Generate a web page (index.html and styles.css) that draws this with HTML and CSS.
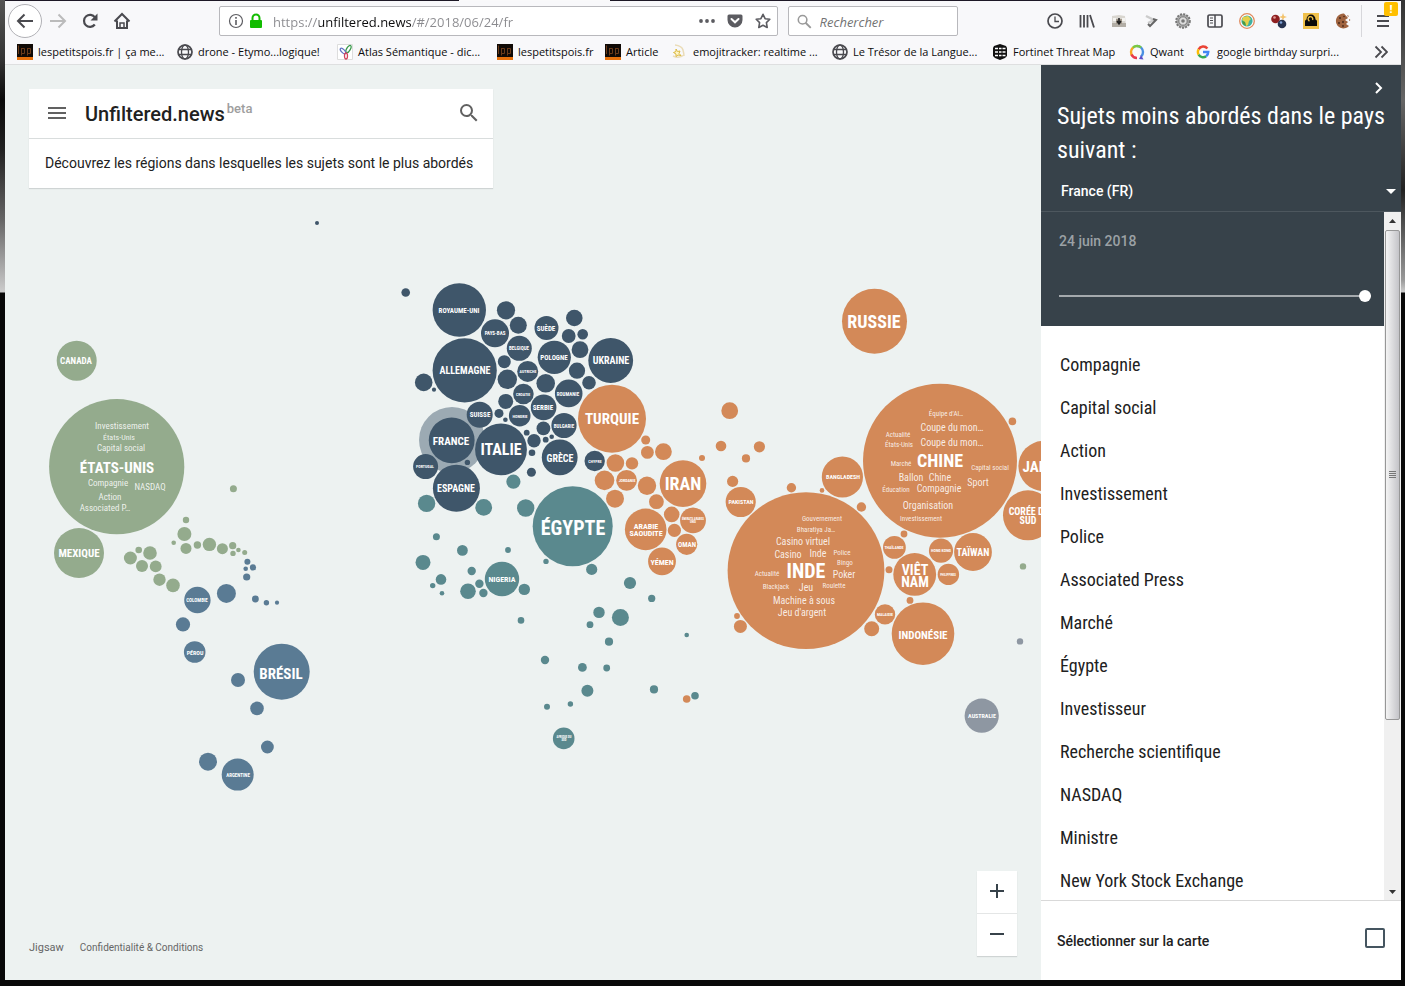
FILE: index.html
```html
<!DOCTYPE html>
<html lang="fr">
<head>
<meta charset="utf-8">
<title>Unfiltered.news</title>
<link rel="stylesheet" href="styles.css">
</head>
<body>
<div class="window">
  <div class="tabline"><span class="tabline-active"></span></div>
  <header class="chrome">
    <div class="navbar">
      <button class="tool back" aria-label="Précédent"><svg width="18" height="18" viewBox="0 0 18 18"><path d="M17 9H2M8.500 2.500L2 9l6.500 6.500" fill="none" stroke="#4a4a4f" stroke-width="2"/></svg></button>
      <button class="tool" aria-label="Suivant"><svg width="18" height="18" viewBox="0 0 18 18"><path d="M1 9h15M9.500 2.500L16 9l-6.500 6.500" fill="none" stroke="#bbb" stroke-width="2"/></svg></button>
      <button class="tool" aria-label="Actualiser"><svg width="18" height="18" viewBox="0 0 18 18"><path d="M13.800 12.500A6 6 0 1 1 14 5.500" fill="none" stroke="#4a4a4f" stroke-width="2.200"/><path d="M16.500 1.500v7h-7z" fill="#4a4a4f"/></svg></button>
      <button class="tool" aria-label="Accueil"><svg width="18" height="18" viewBox="0 0 18 18"><path d="M1.500 9.500L9 2l7.500 7.500M4 8.500V16h10V8.500" fill="none" stroke="#4a4a4f" stroke-width="2"/><path d="M7 16v-5h4v5z" fill="none" stroke="#4a4a4f" stroke-width="1.500"/></svg></button>
      <div class="urlbar">
        <svg width="16" height="16" viewBox="0 0 16 16"><circle cx="8" cy="8" r="6.500" fill="none" stroke="#5c5c61" stroke-width="1.200"/><path d="M8 7v5M8 4v1.700" stroke="#5c5c61" stroke-width="1.600"/></svg>
        <svg width="14" height="16" viewBox="0 0 14 16"><path d="M3.500 8V5a3.500 3.500 0 0 1 7 0v3" fill="none" stroke="#12bc00" stroke-width="2"/><rect x="1" y="7" width="12" height="8" rx="1" fill="#12bc00"/></svg>
        <input class="url" type="text" aria-label="Adresse" value="https://unfiltered.news/#/2018/06/24/fr">
        <button class="tool small" aria-label="Actions"><svg width="18" height="6" viewBox="0 0 18 6"><g fill="#5c5c61"><circle cx="3" cy="3" r="1.900"/><circle cx="9" cy="3" r="1.900"/><circle cx="15" cy="3" r="1.900"/></g></svg></button>
        <button class="tool small" aria-label="Pocket"><svg width="16" height="16" viewBox="0 0 16 16"><path d="M2 1.500h12a1.500 1.500 0 0 1 1.500 1.500v4a7.500 7.500 0 0 1-15 0V3A1.500 1.500 0 0 1 2 1.500z" fill="#5c5c61"/><path d="M4.500 6L8 9.300 11.500 6" fill="none" stroke="#fff" stroke-width="2" stroke-linecap="round"/></svg></button>
        <button class="tool small" aria-label="Favori"><svg width="16" height="16" viewBox="0 0 16 16"><path d="M8 1.300l2.100 4.400 4.700.6-3.400 3.300.8 4.900L8 12.200l-4.200 2.300.8-4.900L1.200 6.300l4.700-.6z" fill="none" stroke="#5c5c61" stroke-width="1.600" stroke-linejoin="round"/></svg></button>
      </div>
      <div class="searchbar">
        <svg width="17" height="17" viewBox="0 0 17 17"><circle cx="6.500" cy="6.500" r="5" fill="none" stroke="#999" stroke-width="1.800"/><path d="M10 10l6 6" stroke="#999" stroke-width="2.200"/></svg>
        <input type="search" aria-label="Rechercher" placeholder="Rechercher">
      </div>
      <div class="extensions">
        <button class="tool" aria-label="Historique"><svg width="16" height="16" viewBox="0 0 16 16"><circle cx="8" cy="8" r="7" fill="none" stroke="#4a4a4f" stroke-width="1.700"/><path d="M8 3.500v5h4" fill="none" stroke="#4a4a4f" stroke-width="1.300"/></svg></button>
        <button class="tool" aria-label="Bibliothèque"><svg width="16" height="16" viewBox="0 0 16 16"><path d="M1.500 2v12.500M5 2v12.500M8.500 2v12.500M11 2l4 12.500" stroke="#4a4a4f" stroke-width="1.800"/></svg></button>
        <button class="tool" aria-label="Capture"><svg width="16" height="16" viewBox="0 0 16 16"><path d="M1 3l7-1 6 1 1 11H1z" fill="#d9d6d0"/><path d="M1 10h14v4H1z" fill="#b3aea6"/><path d="M2 5h3v3H2zM11 5h3v3h-3z" fill="#f4f3f0"/><path d="M5 6h6v5H5z" fill="#a39a8e"/><path d="M8 5v5M6 8l2 3 2-3" stroke="#222" stroke-width="1.500" fill="none"/></svg></button>
        <button class="tool" aria-label="Rediriger"><svg width="16" height="16" viewBox="0 0 16 16"><path d="M3 3l8 4-6 3" fill="none" stroke="#ccc" stroke-width="2.500"/><path d="M5 11l2 2 6-6-3-1" fill="none" stroke="#666" stroke-width="2"/></svg></button>
        <button class="tool" aria-label="Réglages"><svg width="16" height="16" viewBox="0 0 16 16"><circle cx="8" cy="8" r="6.800" fill="#aaa" stroke="#777" stroke-width="2" stroke-dasharray="2 1.200"/><circle cx="8" cy="8" r="4.200" fill="#ddd" stroke="#777"/><circle cx="8" cy="8" r="1.800" fill="#777"/></svg></button>
        <button class="tool" aria-label="Barre latérale"><svg width="16" height="16" viewBox="0 0 16 16"><rect x="1" y="2" width="14" height="12" rx="1.500" fill="none" stroke="#4a4a4f" stroke-width="1.700"/><path d="M8 2v12" stroke="#4a4a4f" stroke-width="1.500"/><path d="M3 5h3M3 7.500h3M3 10h3" stroke="#4a4a4f"/></svg></button>
        <button class="tool" aria-label="Globe"><svg width="16" height="16" viewBox="0 0 16 16"><circle cx="8" cy="8" r="7.300" fill="#fff" stroke="#e08a5c" stroke-width="1.300"/><circle cx="8" cy="8" r="5.600" fill="#3fb0a0"/><path d="M4 4l5-1 3 3-2 2-1 4-2 1-1-4-3-2z" fill="#e3d04a"/><path d="M3 8l3 1 1 4-3-2z" fill="#4f9a3c"/></svg></button>
        <button class="tool" aria-label="Sphères"><svg width="16" height="16" viewBox="0 0 16 16"><path d="M12 0l1 3 3 1-3 1-1 3-1-3-3-1 3-1z" fill="#f3c26b"/><circle cx="4.500" cy="6" r="4.300" fill="#8e1f20"/><circle cx="3.500" cy="4.500" r="1.300" fill="#e29a94"/><circle cx="11" cy="11" r="4.300" fill="#26324f"/><circle cx="10" cy="9.500" r="1.300" fill="#7fa2d8"/></svg></button>
        <button class="tool" aria-label="Cadenas"><svg width="16" height="16" viewBox="0 0 16 16"><path fill="#f0c14b" d="M0 0h16v16H0z"/><path d="M2 13V8q0-1 1.500-1.500a4.500 5 0 0 1 9 0Q14 7 14 8v5z" fill="#0a0a0a"/><path d="M6.500 8a2.300 2.300 0 1 1 3-1" fill="none" stroke="#e5b93f" stroke-width="1.400"/></svg></button>
        <button class="tool" aria-label="Cookies"><svg width="16" height="16" viewBox="0 0 16 16"><path d="M9 .5A7.500 7.500 0 1 0 14 13l-3-2 2-2-3-2 3-2z" fill="#a0633f"/><path d="M12 2l2 1-1 1zM14 6l1.500 1-1.500 1z" fill="#a0633f"/><g fill="#4a2a1b"><circle cx="5" cy="5" r="1"/><circle cx="8" cy="9" r="1"/><circle cx="4" cy="10" r="1"/><circle cx="9" cy="3.500" r=".8"/><circle cx="8" cy="13" r=".9"/></g></svg></button>
      </div>
      <button class="tool menu" aria-label="Menu"><svg width="16" height="16" viewBox="0 0 16 16"><path d="M2 3h12M2 8h12M2 13h12" stroke="#4a4a4f" stroke-width="2"/></svg><span class="badge">!</span></button>
    </div>
    <nav class="bookmarks">
      <a class="bm long" href="#"><svg width="16" height="16" viewBox="0 0 16 16"><use href="#lpp"/></svg>lespetitspois.fr | ça me...</a>
      <a class="bm long" href="#"><svg width="16" height="16" viewBox="0 0 16 16"><use href="#globe"/></svg>drone - Etymo...logique!</a>
      <a class="bm long" href="#"><svg width="16" height="16" viewBox="0 0 16 16"><path d="M.5.5h15v15H.5z" fill="#fff" stroke="#ddd"/><g fill="none" stroke-width="1.300"><ellipse cx="11.500" cy="5" rx="1.800" ry="4" transform="rotate(30 11.500 5)" stroke="#3a9a4c"/><ellipse cx="6" cy="7" rx="1.600" ry="3.500" transform="rotate(-45 6 7)" stroke="#6474c4"/><ellipse cx="9" cy="12" rx="1.500" ry="3" stroke="#d3445c"/></g></svg>Atlas Sémantique - dic...</a>
      <a class="bm mid" href="#"><svg width="16" height="16" viewBox="0 0 16 16"><use href="#lpp"/></svg>lespetitspois.fr</a>
      <a class="bm short" href="#"><svg width="16" height="16" viewBox="0 0 16 16"><use href="#lpp"/></svg>Article</a>
      <a class="bm long" href="#"><svg width="16" height="16" viewBox="0 0 16 16"><path d="M3 1q7 1 8 5t1 6M1 12q6 3 11-1" fill="none" stroke="#eadcb8" stroke-width="1.500"/><path d="M4 5l1.500 2.500L8 7 7 9.500l2 2-3-.5-2 1.500V10L1.500 8.500l2.500-1z" fill="#fff6c8" stroke="#dcb93f"/></svg>emojitracker: realtime ...</a>
      <a class="bm long" href="#"><svg width="16" height="16" viewBox="0 0 16 16"><use href="#globe"/></svg>Le Trésor de la Langue...</a>
      <a class="bm medium" href="#"><svg width="16" height="16" viewBox="0 0 16 16"><path d="M8 0l6 2 1 2v8l-2 2-5 2-5-2-2-2V4l1-2z" fill="#111"/><path d="M3 4.500h3M3 8h3M3 11.500h3M7 4.500h2.500M7 8h2.500M7 11.500h2.500M10.500 4.500h3M10.500 8h3M10.500 11.500h3" stroke="#fff" stroke-width="1.300"/></svg>Fortinet Threat Map</a>
      <a class="bm short" href="#"><svg width="16" height="16" viewBox="0 0 16 16"><g fill="none" stroke-width="2.400"><path d="M8 2a6 6 0 0 1 6 6c0 2-.8 3.500-1.800 4.500" stroke="#4a90e2"/><path d="M3.500 4A6 6 0 0 1 8 2q2.500 0 4 1.500" stroke="#7ac943"/><path d="M3.500 12A6 6 0 0 1 4 3.600" stroke="#f5a623"/><path d="M8 14a6 6 0 0 1-5.500-3.500" stroke="#e8394d"/></g><path d="M10 15l4.500.5L12 11z" fill="#5b4fc9"/></svg>Qwant</a>
      <a class="bm long" href="#"><svg width="14" height="14" viewBox="0 0 16 16"><g fill="none" stroke-width="2.800"><path d="M13 4A6 6 0 0 0 3 5" stroke="#ea4335"/><path d="M3 5a6 6 0 0 0 0 6" stroke="#fbbc05"/><path d="M3 11a6 6 0 0 0 8.500 2" stroke="#34a853"/><path d="M11.500 13Q14 11 14 8H8" stroke="#4285f4"/></g></svg><span class="gap">google birthday surpri...</span></a>
      <button class="tool more" aria-label="Plus de marque-pages"><svg width="14" height="14" viewBox="0 0 14 14"><path d="M1.500 1.500L7 7l-5.500 5.500M7.500 1.500L13 7l-5.500 5.500" fill="none" stroke="#4a4a4f" stroke-width="1.800"/></svg></button>
    </nav>
  </header>

  <main class="page">
    <section class="mapview">
      <svg class="map" viewBox="5 65 1036 915" preserveAspectRatio="xMidYMid slice" role="img" aria-label="Carte des sujets">
        <g class="north-america">
          <circle cx="76.700" cy="360.700" r="20"/><circle cx="116.700" cy="466.700" r="67.600"/><circle cx="79" cy="553" r="25"/>
          <circle cx="233.400" cy="488.700" r="3.500"/><circle cx="186" cy="520" r="3.200"/><circle cx="184.400" cy="534" r="7"/><circle cx="173.700" cy="542.700" r="2.300"/><circle cx="186" cy="548.400" r="5.500"/><circle cx="197.400" cy="545" r="3.700"/><circle cx="209.400" cy="544.400" r="6.700"/><circle cx="222.400" cy="548.700" r="5.500"/><circle cx="232.700" cy="545.700" r="3.600"/><circle cx="233" cy="553.400" r="2.700"/><circle cx="238.400" cy="550" r="2.300"/><circle cx="244.700" cy="552.400" r="2.500"/>
          <circle cx="130.400" cy="558" r="6.500"/><circle cx="138.700" cy="550" r="3.300"/><circle cx="150" cy="553" r="6.800"/><circle cx="142" cy="566" r="6"/><circle cx="155.700" cy="566.400" r="5.900"/><circle cx="159.500" cy="579.700" r="6.200"/><circle cx="173" cy="585.400" r="6.800"/><circle cx="1023" cy="566.400" r="3.200"/>
        </g>
        <g class="south-america">
          <circle cx="247.400" cy="561.700" r="3"/><circle cx="253" cy="567.400" r="3.100"/><circle cx="245.700" cy="568.700" r="2.300"/><circle cx="246.700" cy="577" r="3.600"/><circle cx="197.400" cy="600" r="13.200"/><circle cx="226.400" cy="593.400" r="9.500"/><circle cx="255.400" cy="599" r="3.400"/><circle cx="266.400" cy="602.700" r="2.700"/><circle cx="277" cy="602.700" r="2.100"/><circle cx="183" cy="624.400" r="7.100"/><circle cx="194.700" cy="652" r="10.800"/><circle cx="281.700" cy="671.700" r="28"/><circle cx="238" cy="680" r="7"/><circle cx="257" cy="708.400" r="6.800"/><circle cx="267.400" cy="747" r="6.400"/><circle cx="208" cy="761.700" r="9"/><circle cx="237.700" cy="774.600" r="16"/>
        </g>
        <circle class="halo" cx="452" cy="440" r="33"/>
        <g class="europe">
          <circle cx="317" cy="223" r="2"/><circle cx="405.700" cy="292.500" r="4.300"/><circle cx="459.300" cy="310" r="26.700"/><circle cx="506" cy="310.300" r="9.100"/><circle cx="518.300" cy="325.300" r="8.500"/><circle cx="495" cy="333.300" r="14"/><circle cx="546.500" cy="328" r="12"/><circle cx="574.300" cy="318" r="8.300"/><circle cx="568.700" cy="336" r="6.900"/><circle cx="582.700" cy="334.300" r="5.300"/><circle cx="580" cy="349.700" r="8.400"/><circle cx="519.300" cy="348.300" r="12.500"/><circle cx="554.300" cy="357.300" r="16.600"/><circle cx="610.700" cy="360.500" r="22.400"/><circle cx="464.700" cy="370.400" r="32.100"/><circle cx="504.300" cy="361.700" r="6.500"/><circle cx="527.700" cy="371.400" r="10.500"/><circle cx="507.300" cy="379.300" r="9.700"/><circle cx="545.700" cy="383.300" r="9.300"/><circle cx="577" cy="370.700" r="8.100"/><circle cx="589" cy="382.700" r="6.800"/><circle cx="568.700" cy="393.400" r="13.800"/><circle cx="423.700" cy="382.400" r="8.800"/><circle cx="434" cy="389.700" r="2.100"/><circle cx="523.400" cy="394" r="10.300"/><circle cx="505.700" cy="401.400" r="7.500"/><circle cx="543.600" cy="407.400" r="12.800"/><circle cx="479.700" cy="414.700" r="13"/><circle cx="499" cy="413.400" r="4.500"/><circle cx="505.400" cy="419.700" r="2.300"/><circle cx="519.700" cy="415.700" r="10.800"/><circle cx="564" cy="425.500" r="12.600"/><circle cx="543.400" cy="428.400" r="6.900"/><circle cx="526.700" cy="432.700" r="2.900"/><circle cx="534" cy="440.700" r="6.700"/><circle cx="545.700" cy="439.700" r="2.900"/><circle cx="551.700" cy="436.700" r="2.300"/><circle cx="532" cy="452.700" r="3.300"/><circle cx="451.700" cy="440.300" r="22.900"/><circle cx="501" cy="449.400" r="25.900"/><circle cx="559.700" cy="457.400" r="17.900"/><circle cx="594.700" cy="461" r="10.200"/><circle cx="425.600" cy="466.600" r="12.500"/><circle cx="467.400" cy="462.400" r="2.700"/><circle cx="456.400" cy="488.300" r="23.500"/><circle cx="531.400" cy="472.300" r="4.500"/>
        </g>
        <g class="africa">
          <circle cx="513.400" cy="481.700" r="7.100"/><circle cx="426.600" cy="503.400" r="8.700"/><circle cx="483.700" cy="507.400" r="8.400"/><circle cx="525.700" cy="508" r="8.700"/><circle cx="572.700" cy="526.300" r="40"/><circle cx="436.400" cy="536.700" r="3.500"/><circle cx="462.400" cy="550.400" r="5.400"/><circle cx="508" cy="550" r="2.900"/><circle cx="423" cy="562.400" r="7.500"/><circle cx="471.700" cy="571" r="4.200"/><circle cx="441" cy="579.400" r="5.300"/><circle cx="432.700" cy="585.600" r="2.700"/><circle cx="442" cy="593.300" r="2.300"/><circle cx="468" cy="591.300" r="7.800"/><circle cx="479.400" cy="583.700" r="4.200"/><circle cx="483.400" cy="593" r="4.200"/><circle cx="502" cy="579" r="17.200"/><circle cx="524.300" cy="589.400" r="5.700"/><circle cx="546" cy="561.400" r="2.700"/><circle cx="591.700" cy="569.400" r="5.600"/><circle cx="630" cy="583" r="6.100"/><circle cx="651.700" cy="598.400" r="3.600"/><circle cx="599" cy="612.400" r="5.700"/><circle cx="620.400" cy="617.400" r="8.500"/><circle cx="590" cy="624.700" r="3.400"/><circle cx="521" cy="620.400" r="3.300"/><circle cx="609" cy="641.700" r="4.100"/><circle cx="686.700" cy="635" r="2.300"/><circle cx="545" cy="660" r="4.200"/><circle cx="582.400" cy="667.400" r="4.400"/><circle cx="606.700" cy="668" r="3.400"/><circle cx="587.400" cy="690.700" r="6"/><circle cx="654" cy="689.400" r="4.100"/><circle cx="695" cy="695.700" r="3.800"/><circle cx="547" cy="706.700" r="3"/><circle cx="570.400" cy="704" r="2.700"/><circle cx="563.700" cy="738.400" r="10.800"/>
        </g>
        <g class="asia">
          <circle cx="874.500" cy="321.300" r="32.500"/><circle cx="612" cy="418.700" r="34"/><circle cx="686.700" cy="699" r="3.800"/><circle cx="645.700" cy="440" r="4.500"/><circle cx="647.400" cy="452.400" r="6.400"/><circle cx="663.400" cy="451.700" r="8.400"/><circle cx="702" cy="458" r="3"/><circle cx="683" cy="483.600" r="23.300"/><circle cx="615.400" cy="463" r="8.800"/><circle cx="632" cy="463.400" r="6.200"/><circle cx="604.500" cy="480.400" r="9.800"/><circle cx="626.600" cy="480.400" r="10.400"/><circle cx="647" cy="485.700" r="9.200"/><circle cx="615" cy="498.700" r="9"/><circle cx="656.400" cy="501.700" r="7.400"/><circle cx="671.700" cy="514.400" r="7.800"/><circle cx="674.400" cy="530.400" r="6.600"/><circle cx="693" cy="520.400" r="12.900"/><circle cx="645.700" cy="529.400" r="20.800"/><circle cx="686.700" cy="544.300" r="10.600"/><circle cx="662" cy="561.400" r="13.900"/><circle cx="729.700" cy="410.700" r="8.400"/><circle cx="721" cy="446" r="5.300"/><circle cx="759.400" cy="446.800" r="5.600"/><circle cx="746" cy="458.400" r="4.100"/><circle cx="732.600" cy="481.400" r="5.600"/><circle cx="740.700" cy="502" r="15.100"/><circle cx="791.400" cy="487.700" r="4.700"/><circle cx="822" cy="490.400" r="2.300"/><circle cx="842.400" cy="477" r="20.600"/><circle cx="806" cy="570.700" r="78.400"/><circle cx="737" cy="616" r="2.900"/><circle cx="740.400" cy="626.400" r="6.500"/><circle cx="940" cy="460.700" r="77"/><circle cx="1012.400" cy="421.400" r="3.800"/><circle cx="1043.400" cy="466" r="25"/><circle cx="1028" cy="515.300" r="25"/><circle cx="861.400" cy="507" r="4.700"/><circle cx="904" cy="534" r="3.400"/><circle cx="894.400" cy="547.400" r="11.400"/><circle cx="889" cy="569.700" r="3.500"/><circle cx="914.700" cy="574.400" r="21.400"/><circle cx="941" cy="550.700" r="12.100"/><circle cx="973" cy="552" r="18.900"/><circle cx="948.400" cy="574.400" r="10.700"/><circle cx="910" cy="600.400" r="3.400"/><circle cx="885" cy="614.400" r="10.200"/><circle cx="871.700" cy="628.700" r="7.500"/><circle cx="923" cy="633.700" r="31.300"/>
        </g>
        <g class="oceania"><circle cx="981.700" cy="715.700" r="17.100"/><circle cx="1020" cy="641.400" r="3.200"/></g>

        <g class="names">
          <text class="s9" x="76" y="364">CANADA</text><text class="s15" x="117" y="473">ÉTATS-UNIS</text><text class="s11" x="79" y="557">MEXIQUE</text>
          <text class="s5" x="197" y="602">COLOMBIE</text><text class="s6" x="195" y="655">PÉROU</text><text class="s15" x="281" y="679">BRÉSIL</text><text class="s5" x="238" y="777">ARGENTINE</text>
          <text class="s7" x="459" y="313">ROYAUME-UNI</text><text class="s5" x="495" y="335">PAYS-BAS</text><text class="s7" x="546" y="331">SUÈDE</text><text class="s5" x="519" y="350">BELGIQUE</text><text class="s7" x="554" y="360">POLOGNE</text><text class="s10" x="611" y="364">UKRAINE</text><text class="s10" x="465" y="374">ALLEMAGNE</text><text class="s4" x="528" y="373">AUTRICHE</text><text class="s4" x="523" y="396">CROATIE</text><text class="s5" x="568" y="396">ROUMANIE</text><text class="s7" x="543" y="410">SERBIE</text><text class="s7" x="480" y="417">SUISSE</text><text class="s4" x="520" y="418">HONGRIE</text><text class="s5" x="564" y="428">BULGARIE</text><text class="s11" x="451" y="445">FRANCE</text><text class="s16" x="501" y="455">ITALIE</text><text class="s10" x="560" y="462">GRÈCE</text><text class="s4" x="595" y="463">CHYPRE</text><text class="s4" x="425" y="468">PORTUGAL</text><text class="s10" x="456" y="492">ESPAGNE</text>
          <text class="s20" x="573" y="535">ÉGYPTE</text><text class="s8" x="502" y="582">NIGERIA</text><text class="s3" x="564" y="738">AFRIQUE DU<tspan x="564" dy="3">SUD</tspan></text>
          <text class="s18" x="874" y="328">RUSSIE</text><text class="s15" x="612" y="424">TURQUIE</text><text class="s18" x="683" y="490">IRAN</text><text class="s4" x="627" y="482">JORDANIE</text><text class="s3" x="693" y="520">ÉMIRATS ARABES<tspan x="693" dy="3">UNIS</tspan></text><text class="s8" x="646" y="529">ARABIE<tspan x="646" dy="7">SAOUDITE</tspan></text><text class="s7" x="687" y="547">OMAN</text><text class="s8" x="662" y="565">YÉMEN</text><text class="s6" x="741" y="504">PAKISTAN</text><text class="s6" x="843" y="479">BANGLADESH</text><text class="s20" x="806" y="578">INDE</text><text class="s18" x="940" y="467">CHINE</text><text class="s15" x="1044" y="472">JAPON</text><text class="s10" x="1029" y="515">CORÉE DU<tspan x="1028" dy="9">SUD</tspan></text><text class="s4" x="894" y="549">THAÏLANDE</text><text class="s14" x="915" y="575">VIÊT<tspan x="915" dy="12">NAM</tspan></text><text class="s4" x="941" y="552">HONG KONG</text><text class="s10" x="973" y="556">TAÏWAN</text><text class="s3" x="948" y="576">PHILIPPINES</text><text class="s4" x="885" y="616">MALAISIE</text><text class="s11" x="923" y="639">INDONÉSIE</text><text class="s6" x="982" y="718">AUSTRALIE</text>
        </g>
        <g class="topics">
          <text class="s9" x="122" y="429">Investissement</text><text class="s8" x="119" y="440">États-Unis</text><text class="s9" x="121" y="451">Capital social</text><text class="s9" x="108" y="486">Compagnie</text><text class="s9" x="150" y="490">NASDAQ</text><text class="s9" x="110" y="500">Action</text><text class="s9" x="105" y="511">Associated P…</text>
          <text class="s7" x="822" y="521">Gouvernement</text><text class="s7" x="816" y="532">Bharatiya Ja…</text><text class="s10" x="803" y="545">Casino virtuel</text><text class="s10" x="788" y="558">Casino</text><text class="s10" x="818" y="557">Inde</text><text class="s7" x="842" y="555">Police</text><text class="s7" x="845" y="565">Bingo</text><text class="s7" x="767" y="576">Actualité</text><text class="s10" x="844" y="578">Poker</text><text class="s7" x="776" y="589">Blackjack</text><text class="s10" x="806" y="591">Jeu</text><text class="s7" x="834" y="588">Roulette</text><text class="s10" x="804" y="604">Machine à sous</text><text class="s10" x="802" y="616">Jeu d'argent</text>
          <text class="s7" x="946" y="416">Équipe d'Al…</text><text class="s10" x="952" y="431">Coupe du mon…</text><text class="s10" x="952" y="446">Coupe du mon…</text><text class="s7" x="898" y="437">Actualité</text><text class="s7" x="899" y="447">États-Unis</text><text class="s7" x="901" y="466">Marché</text><text class="s7" x="990" y="470">Capital social</text><text class="s10" x="911" y="481">Ballon</text><text class="s10" x="940" y="481">Chine</text><text class="s10" x="978" y="486">Sport</text><text class="s7" x="896" y="492">Éducation</text><text class="s10" x="939" y="492">Compagnie</text><text class="s10" x="928" y="509">Organisation</text><text class="s7" x="921" y="521">Investissement</text>
        </g>
      </svg>
      <div class="card">
        <div class="card-head">
          <button class="tool" aria-label="Menu principal"><svg width="24" height="24" viewBox="0 0 24 24"><path d="M3 18h18v-2H3zm0-5h18v-2H3zm0-7v2h18V6z" fill="#616161"/></svg></button>
          <h1>Unfiltered.news<sup>beta</sup></h1>
          <button class="tool" aria-label="Recherche"><svg width="24" height="24" viewBox="0 0 24 24"><path d="M15.500 14h-.79l-.28-.27A6.470 6.470 0 0 0 16 9.500 6.500 6.500 0 1 0 9.500 16c1.610 0 3.090-.59 4.230-1.570l.27.28v.79l5 4.990L20.490 19zm-6 0C7.010 14 5 11.990 5 9.500S7.010 5 9.500 5 14 7.010 14 9.500 11.990 14 9.500 14z" fill="#616161"/></svg></button>
        </div>
        <p>Découvrez les régions dans lesquelles les sujets sont le plus abordés</p>
      </div>
      <footer class="legal"><a class="jigsaw" href="#">Jigsaw</a><a href="#">Confidentialité &amp; Conditions</a></footer>
      <div class="zoom">
        <button aria-label="Zoom avant"><svg width="14" height="14" viewBox="0 0 14 14"><path d="M0 7h14M7 0v14" stroke="#37424a" stroke-width="2"/></svg></button>
        <button aria-label="Zoom arrière"><svg width="14" height="14" viewBox="0 0 14 14"><path d="M0 7h14" stroke="#37424a" stroke-width="2"/></svg></button>
      </div>
    </section>

    <aside class="panel">
      <div class="panel-head">
        <button class="tool collapse" aria-label="Replier"><svg width="10" height="14" viewBox="0 0 10 14"><path d="M2 2l5 5-5 5" fill="none" stroke="#fff" stroke-width="2"/></svg></button>
        <h2>Sujets moins abordés dans le pays suivant :</h2>
        <div class="country">
          <select aria-label="Pays"><option>France (FR)</option></select>
          <svg width="10" height="5" viewBox="0 0 10 5"><path d="M0 0h10L5 5z" fill="#fff"/></svg>
        </div>
      </div>
      <div class="panel-body">
        <div class="scroll">
          <div class="date"><label for="day">24 juin 2018</label><input id="day" type="range" min="0" max="100" value="100"></div>
          <ul>
            <li>Compagnie</li><li>Capital social</li><li>Action</li><li>Investissement</li><li>Police</li><li>Associated Press</li><li>Marché</li><li>Égypte</li><li>Investisseur</li><li>Recherche scientifique</li><li>NASDAQ</li><li>Ministre</li><li>New York Stock Exchange</li>
          </ul>
        </div>
        <div class="scrollbar">
          <svg width="17" height="18" viewBox="0 0 17 18"><path d="M5 11h7L8.500 7z" fill="#333"/></svg>
          <div class="thumb"><svg width="7" height="8" viewBox="0 0 7 8"><path d="M0 .5h7M0 2.500h7M0 4.500h7M0 6.500h7" stroke="#777"/></svg></div>
          <svg width="17" height="18" viewBox="0 0 17 18"><path d="M5 8h7l-3.500 4z" fill="#333"/></svg>
        </div>
      </div>
      <label class="panel-foot">Sélectionner sur la carte<input type="checkbox"></label>
    </aside>
  </main>
</div>
<svg class="defs" width="0" height="0" viewBox="0 0 16 16">
  <symbol id="globe" viewBox="0 0 16 16"><circle cx="8" cy="8" r="7" fill="none" stroke="#4a4a4f" stroke-width="1.700"/><ellipse cx="8" cy="8" rx="3.500" ry="7" fill="none" stroke="#4a4a4f" stroke-width="1.300"/><path d="M1.500 5.500h13M1.500 10.500h13" stroke="#4a4a4f" stroke-width="1.300"/></symbol>
  <symbol id="lpp" viewBox="0 0 16 16"><path fill="#100a06" d="M0 0h16v13H0z"/><path fill="#e8720c" d="M0 13h16v3H0z"/><path d="M1.500 1.500v8.500M4.500 4v7.500M4.500 4.500h3v5h-3M10.500 4v7.500M10.500 4.500h3v5h-3" fill="none" stroke="#6b3b1a"/></symbol>
</svg>
</body>
</html>
```
FILE: styles.css
```css
* { box-sizing: border-box; }
body { margin: 0; font-family: Roboto, "Liberation Sans", sans-serif; }
button, input, select { font: inherit; margin: 0; }
.defs { display: block; position: absolute; }

.window {
  height: 100vh;
  display: flex;
  flex-direction: column;
  padding: 0 4px 6px 5px;
  background:
    linear-gradient(#555 0, #333 60px, #0a0a0a 100px, #222 150px, #666 220px, #ccc 292px, transparent 293px) left / 5px 100% no-repeat,
    linear-gradient(#333 0, #666 100px, #222 190px, #999 280px, #ccc 292px, transparent 293px) right / 4px 100% no-repeat,
    #080808;
}
.tabline { height: 1px; background: #1d1826; display: flex; justify-content: center; }
.tabline-active { flex: 0 0 151px; margin-right: 337px; background: #f9f9fa; }

.chrome { flex: none; background: #f8f8fa; border-bottom: 1px solid #dedfe0; font-family: "Open Sans", "Noto Sans", sans-serif; }
.tool { display: flex; align-items: center; justify-content: center; flex: none; width: 32px; height: 32px; padding: 0; border: 0; background: none; }
.tool.small { width: 28px; }
.navbar { display: flex; align-items: center; height: 40px; padding: 0 2px 0 3px; }
.tool.back { width: 34px; height: 34px; border: 1px solid #b1b1b6; border-radius: 50%; background: #fff; }
.urlbar, .searchbar { display: flex; align-items: center; height: 30px; background: #fff; border: 1px solid #b8b8bc; border-radius: 2px; }
.urlbar { flex: 1; margin-left: 81px; padding: 0 0 0 8px; gap: 5px; }
.urlbar .small { margin-left: -5px; }
.url {
  flex: 1; min-width: 0; height: 28px; padding: 2px 0 0; margin-left: 5px; border: 0; outline: 0; font-size: 13px;
  color: transparent;
  background: linear-gradient(90deg, #8a8a8e 46px, #0c0c0d 46px 138px, #8a8a8e 138px);
  -webkit-background-clip: text; background-clip: text;
}
.searchbar { flex: 0 0 170px; margin-left: 10px; padding-left: 8px; gap: 8px; }
.searchbar input { width: 100%; min-width: 0; border: 0; padding: 2px 0 0; outline: 0; background: none; font-size: 13px; font-style: italic; }
.searchbar input::placeholder { color: #737373; }
.extensions { display: flex; margin-left: 81px; }
.tool.menu { position: relative; width: 38px; margin-left: 2px; padding-left: 4px; border-left: 1px solid #d7d7db; }
.badge { position: absolute; top: -3px; right: 1px; width: 14px; height: 14px; border-radius: 2px; background: #ffbf00; color: #fff; font-size: 11px; font-weight: 700; line-height: 14px; text-align: center; }
.bookmarks { display: flex; align-items: center; height: 23px; padding: 0 8px 2px 12px; }
.bm { display: flex; align-items: center; flex: none; gap: 5px; color: #0c0c0d; text-decoration: none; font-size: 11px; white-space: nowrap; }
.gap { margin-left: 2px; }
.long { width: 160px; }
.mid { width: 108px; }
.medium { width: 137px; }
.short { width: 67px; }
.tool.more { width: 24px; height: 20px; margin-left: auto; }

.page { flex: 1; min-height: 0; display: flex; }
.mapview { position: relative; flex: 1; min-width: 0; display: flex; flex-direction: column; justify-content: space-between; align-items: flex-start; background: #edf2f1; overflow: hidden; }
.map { position: absolute; inset: 0; width: 100%; height: 100%; }
.north-america { fill: #94ab8d; }
.south-america { fill: #5a7b94; }
.europe { fill: #3f566a; }
.halo { fill: #9caab3; }
.africa { fill: #5a898e; }
.asia { fill: #d38958; }
.oceania { fill: #8e97a2; }
.names, .topics { text-anchor: middle; fill: #fff; font-family: "Roboto Condensed", "Liberation Sans Narrow", Roboto, sans-serif; }
.names { font-weight: 700; }
.topics { fill-opacity: 0.85; }
.s3 { font-size: 3px; } .s4 { font-size: 4px; } .s5 { font-size: 5px; } .s6 { font-size: 6px; }
.s7 { font-size: 7px; } .s8 { font-size: 8px; } .s9 { font-size: 9px; } .s10 { font-size: 10px; }
.s11 { font-size: 11px; } .s14 { font-size: 14px; } .s15 { font-size: 15px; } .s16 { font-size: 16px; }
.s18 { font-size: 18px; } .s20 { font-size: 20px; }

.card { position: relative; width: 464px; max-width: calc(100% - 48px); margin: 24px; background: #fff; box-shadow: 0 1px 1px #cfd4d4; }
.card-head { display: flex; align-items: center; height: 50px; padding: 0 8px 0 12px; border-bottom: 1px solid #d9dddd; }
.card-head .tool { padding-bottom: 2px; }
.card h1 { flex: 1; margin: 0 0 0 12px; font-size: 20px; font-weight: 500; line-height: 24px; color: #212121; }
.card sup { margin-left: 2px; font-size: 13px; line-height: 1px; color: #9e9e9e; }
.card p { margin: 0; padding: 0 16px; font-size: 14px; line-height: 49px; color: #212121; white-space: nowrap; }
.legal { position: relative; display: flex; gap: 16px; align-items: center; padding: 0 24px 24px; font-size: 10px; line-height: 16px; }
.legal a { color: #666; text-decoration: none; }
.legal .jigsaw { font-size: 11px; }
.zoom { position: absolute; right: 24px; bottom: 24px; display: grid; gap: 1px; width: 40px; background: #e4e6e6; box-shadow: 0 1px 1px #cfd4d4; }
.zoom button { display: flex; align-items: center; justify-content: center; height: 42px; padding: 0 0 2px; border: 0; background: #fff; }

.panel { flex: 0 0 360px; display: flex; flex-direction: column; background: #fff; }
.panel-head { display: flex; flex-direction: column; background: #37424a; color: #fff; border-bottom: 1px solid #4d575e; }
.collapse { align-self: flex-end; width: 20px; height: 22px; margin: 12px 12px 0 0; }
.panel h2 { margin: 0; padding: 0 0 0 16px; font-family: "Roboto Condensed", "Liberation Sans Narrow", Roboto, sans-serif; font-size: 24px; font-weight: 400; line-height: 34px; }
.country { display: flex; align-items: center; height: 44px; padding: 4px 5px 0 20px; }
.country select { flex: 1; appearance: none; border: 0; padding: 0; background: none; color: #fff; font-size: 14px; font-weight: 500; }
.panel-body { flex: 1; min-height: 0; display: flex; }
.scroll { flex: 1; overflow: hidden; }
.date { display: flex; flex-direction: column; gap: 40px; height: 114px; padding: 20px 13px 0 18px; background: #37424a; color: #9ba1a5; font-size: 14px; font-weight: 500; line-height: 18px; }
.date input { appearance: none; width: 100%; height: 12px; background: linear-gradient(#a4a9ad, #a4a9ad) center / 100% 2px no-repeat; }
.date input::-webkit-slider-thumb { appearance: none; width: 12px; height: 12px; border-radius: 50%; background: #fff; }
.scroll ul { list-style: none; margin: 0; padding: 17px 0 0 19px; font-family: "Roboto Condensed", "Liberation Sans Narrow", Roboto, sans-serif; font-size: 18px; line-height: 43px; color: #212121; }
.scrollbar { flex: 0 0 17px; display: flex; flex-direction: column; background: #f0f0f0; }
.scrollbar > svg { flex: none; }
.thumb { flex: 0 0 490px; display: flex; align-items: center; justify-content: center; margin: 0 1px; border: 1px solid #979797; border-radius: 2px; background: linear-gradient(90deg, #f4f4f4, #dcdcde 50%, #c4c4c8); }
.scrollbar > svg:last-child { margin-top: auto; }
.panel-foot { flex: none; display: flex; align-items: center; justify-content: space-between; height: 80px; padding: 0 16px; border-top: 1px solid #d9d9d9; font-size: 14px; font-weight: 500; color: #212121; }
.panel-foot input { appearance: none; width: 20px; height: 20px; margin-bottom: 5px; border: 2px solid #455560; border-radius: 2px; background: #fff; }
```
